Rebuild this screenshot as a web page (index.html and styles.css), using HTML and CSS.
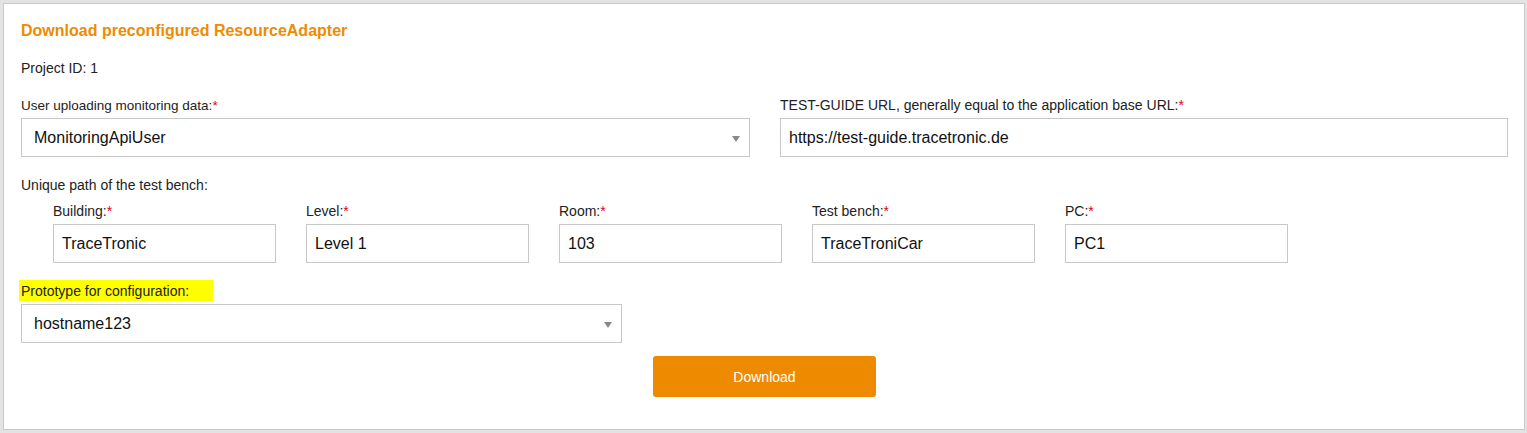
FILE: index.html
```html
<!DOCTYPE html>
<html>
<head>
<meta charset="utf-8">
<link rel="stylesheet" href="styles.css">
</head>
<body>
<div class="panel">
  <h2 class="title">Download preconfigured ResourceAdapter</h2>
  <div class="project">Project ID: 1</div>
  <div class="row two">
    <div class="col">
      <div class="label narrow">User uploading monitoring data:<span class="req">*</span></div>
      <div class="select"><span class="val">MonitoringApiUser</span><span class="arrow"></span></div>
    </div>
    <div class="col">
      <div class="label">TEST-GUIDE URL, generally equal to the application base URL:<span class="req">*</span></div>
      <input class="input url" type="text" value="https://test-guide.tracetronic.de">
    </div>
  </div>
  <div class="label unique">Unique path of the test bench:</div>
  <div class="subrow">
    <div class="sub">
      <div class="label">Building:<span class="req">*</span></div>
      <input class="input" type="text" value="TraceTronic">
    </div>
    <div class="sub">
      <div class="label">Level:<span class="req">*</span></div>
      <input class="input" type="text" value="Level 1">
    </div>
    <div class="sub">
      <div class="label">Room:<span class="req">*</span></div>
      <input class="input" type="text" value="103">
    </div>
    <div class="sub">
      <div class="label">Test bench:<span class="req">*</span></div>
      <input class="input" type="text" value="TraceTroniCar">
    </div>
    <div class="sub">
      <div class="label">PC:<span class="req">*</span></div>
      <input class="input" type="text" value="PC1">
    </div>
  </div>
  <div class="proto-wrap"><span class="label highlight">Prototype for configuration:</span></div>
  <div class="select proto"><span class="val">hostname123</span><span class="arrow"></span></div>
  <div class="actions"><button class="btn" type="button">Download</button></div>
</div>
</body>
</html>
```
FILE: styles.css
```css
* { box-sizing: border-box; }
html, body { margin: 0; padding: 0; }
body {
  background: #e3e3e3;
  font-family: "Liberation Sans", Arial, sans-serif;
  color: #222;
  width: 1527px;
  height: 433px;
  overflow: hidden;
}
.panel {
  margin: 3px 0 0 3px;
  width: 1522px;
  height: 427px;
  background: #fff;
  border: 1px solid #c9c9c9;
  padding: 18px 15px 0 17px;
}
.title {
  margin: 0;
  font-size: 16px;
  line-height: 18px;
  font-weight: bold;
  color: #ee8b00;
}
.project {
  margin-top: 21px;
  font-size: 14px;
  line-height: 15px;
}
.label {
  font-size: 14px;
  line-height: 17px;
  color: #222;
}
.label.narrow { font-size: 13.5px; }
.req { color: #e2001a; }
.row.two {
  margin-top: 21px;
  display: grid;
  grid-template-columns: 729px 728px;
  column-gap: 30px;
}
.col .label { margin-bottom: 4px; }
.select {
  position: relative;
  height: 39px;
  border: 1px solid #c8c8c8;
  background: #fff;
  display: flex;
  align-items: center;
  padding-left: 12px;
  font-size: 16px;
  color: #111;
}
.arrow {
  position: absolute;
  right: 9px;
  top: 17px;
  width: 0;
  height: 0;
  border-left: 4px solid transparent;
  border-right: 4px solid transparent;
  border-top: 6px solid #888;
}
.input {
  display: block;
  width: 100%;
  height: 39px;
  border: 1px solid #c8c8c8;
  background: #fff;
  padding: 0 8px;
  margin: 0;
  font-family: "Liberation Sans", Arial, sans-serif;
  font-size: 16px;
  color: #111;
  outline: none;
}
.unique { margin-top: 20px; }
.subrow {
  margin-top: 9px;
  padding-left: 32px;
  display: flex;
  gap: 30px;
}
.sub { width: 223px; }
.sub .label { margin-bottom: 4px; }
.proto-wrap {
  margin-top: 17px;
  margin-left: -2px;
  height: 21px;
}
.highlight {
  display: inline-block;
  background: #ffff00;
  padding: 3px 3px 1px 2px;
  width: 194px;
}
.select.proto {
  margin-top: 3px;
  width: 601px;
}
.actions {
  margin-top: 13px;
  display: flex;
  justify-content: center;
  padding-right: 1px;
}
.btn {
  width: 223px;
  height: 41px;
  border: none;
  border-radius: 3px;
  background: #ee8a00;
  color: #fff;
  font-family: "Liberation Sans", Arial, sans-serif;
  font-size: 14px;
  padding: 0;
}
```
